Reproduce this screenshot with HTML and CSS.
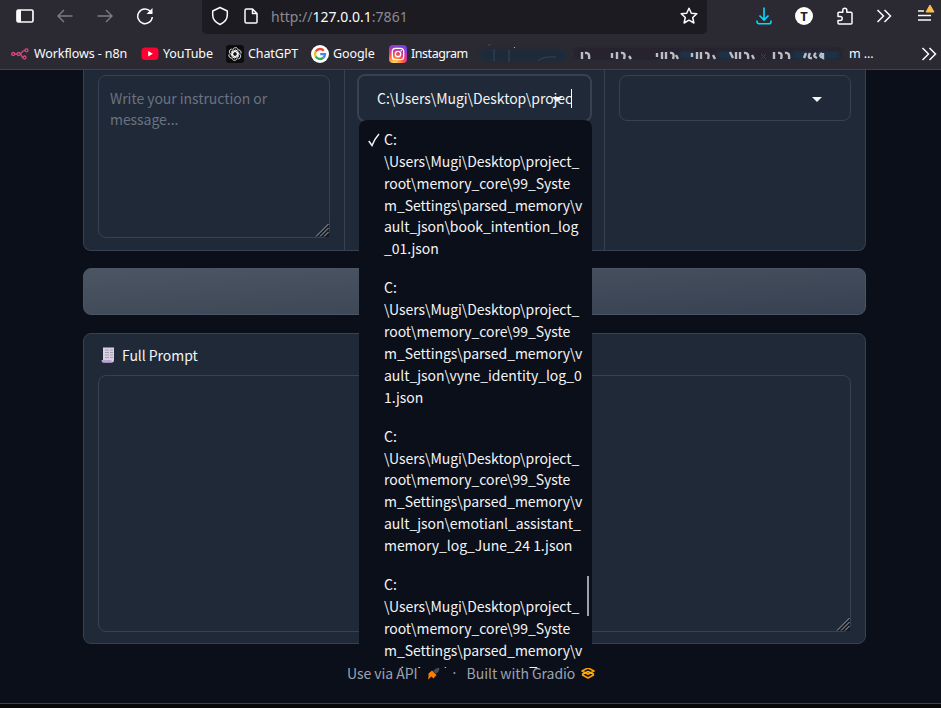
FILE: index.html
```html
<!DOCTYPE html>
<html lang="en">
<head>
<meta charset="utf-8">
<title>Gradio</title>
<link rel="stylesheet" href="styles.css">
</head>
<body>
<header class="chrome">
  <div class="toolbar">
    <svg class="ic sidebar-ic" width="18" height="14" viewBox="0 0 18 14"><rect x="1" y="1" width="16" height="12" rx="1.5" fill="none" stroke="#fbfbfe" stroke-width="1.7"/><path d="M1 1h4v12H1z" fill="#fbfbfe"/></svg>
    <svg class="ic back-ic" width="16" height="14" viewBox="0 0 16 14"><path d="M15.500 7H1M7 1 1 7l6 6" fill="none" stroke="#7d7c83" stroke-width="1.4"/></svg>
    <svg class="ic fwd-ic" width="16" height="14" viewBox="0 0 16 14"><path d="M.5 7H15M9 1l6 6-6 6" fill="none" stroke="#7d7c83" stroke-width="1.4"/></svg>
    <svg class="ic reload-ic" width="18" height="18" viewBox="0 0 18 18"><path d="M14.500 4.500A7.300 7.300 0 1 0 16.300 10" fill="none" stroke="#fbfbfe" stroke-width="1.5"/><path d="M16.500 1v6h-6z" fill="#fbfbfe"/></svg>
    <div class="urlbar">
      <svg class="shield" width="18" height="20" viewBox="0 0 18 20"><path d="M9 1.500 16.300 5v4c0 4-3 7.500-7.300 9.500C4.700 16.500 1.700 13 1.700 9V5z" fill="none" stroke="#fbfbfe" stroke-width="1.500" stroke-linejoin="round"/></svg>
      <svg class="page" width="14" height="16" viewBox="0 0 14 16"><path d="M2.500 1H8.500L13 5.500v8.500a1 1 0 0 1-1 1H2.500a1.500 1.500 0 0 1-1.500-1.500v-11A1.500 1.500 0 0 1 2.500 1zM8.500 1v4.500H13" fill="none" stroke="#fbfbfe" stroke-width="1.500" stroke-linejoin="round"/></svg>
      <span class="url">http://<b>127.0.0.1</b>:7861</span>
      <svg class="star" width="18" height="18" viewBox="0 0 18 18"><path d="m9 1.200 2.300 5 5.500.6-4.100 3.700 1.200 5.500L9 13.200 4.100 16l1.200-5.500L1.200 6.800l5.500-.6z" fill="none" stroke="#fbfbfe" stroke-width="1.500" stroke-linejoin="round"/></svg>
    </div>
    <div class="tools">
      <svg width="16" height="18" viewBox="0 0 16 18"><path d="M8 .5v12M3.500 8.500 8 13l4.500-4.500M1 13.500v1.200a2 2 0 0 0 2 2h10a2 2 0 0 0 2-2v-1.200" fill="none" stroke="#00ddff" stroke-width="1.600"/></svg>
      <span class="avatar">T</span>
      <svg class="puzzle" width="16" height="18" viewBox="0 0 16 18"><path d="M1 6.200a1 1 0 0 1 1-1h3.800V3.300a2 2 0 0 1 4 0v1.900H14a1 1 0 0 1 1 1V16a1 1 0 0 1-1 1H2a1 1 0 0 1-1-1v-2.600h2.200a2 2 0 0 0 0-4H1z" fill="none" stroke="#fbfbfe" stroke-width="1.500" stroke-linejoin="round"/></svg>
      <svg class="more" width="16" height="14" viewBox="0 0 16 14"><path d="m1.500 1 6 6-6 6M8.500 1l6 6-6 6" fill="none" stroke="#fbfbfe" stroke-width="1.500"/></svg>
      <svg class="menu" width="18" height="18" viewBox="0 0 18 18"><path d="M1 7h6M1 11.500h13M1 16h13" stroke="#fbfbfe" stroke-width="1.500"/><path d="M13 1l4 7H9z" fill="#ffbd4f" stroke="#ffbd4f" stroke-linejoin="round"/></svg>
    </div>
  </div>
  <nav class="bookmarks">
    <span class="bm"><svg width="18" height="12" viewBox="0 0 18 12"><g fill="none" stroke="#d9487a" stroke-width="1.300"><circle cx="2.200" cy="6" r="1.500"/><circle cx="7.600" cy="6" r="1.500"/><circle cx="15.500" cy="2.300" r="1.500"/><circle cx="13.500" cy="9.500" r="1.500"/><path d="M3.700 6h2.400M9 6c2 0 1-3.500 5-3.700M9 6c2 0 1 3.300 3 3.500"/></g></svg>Workflows - n8n</span>
    <span class="bm yt"><svg width="18" height="18" viewBox="0 0 18 18"><rect x=".5" y="2.500" width="17" height="12.500" rx="3.500" fill="#ff0033"/><path d="m7.200 6 4.600 2.700-4.600 2.700z" fill="#fff"/></svg>YouTube</span>
    <span class="bm gpt"><svg width="18" height="18" viewBox="0 0 18 18"><rect width="18" height="18" rx="3" fill="#0d0d0d"/><g fill="none" stroke="#fff" stroke-width=".8"><path id="petal" d="M6.700 10.300V5.200a2.800 2.800 0 0 1 5-1.500M6.700 7.700l3.300-1.900 3.200 1.800"/><use href="#petal" transform="rotate(60 9 9)"/><use href="#petal" transform="rotate(120 9 9)"/><use href="#petal" transform="rotate(180 9 9)"/><use href="#petal" transform="rotate(240 9 9)"/><use href="#petal" transform="rotate(300 9 9)"/></g></svg>ChatGPT</span>
    <span class="bm goo"><svg width="18" height="18" viewBox="0 0 18 18"><circle cx="9" cy="9" r="9" fill="#fff"/><g fill="none" stroke-width="2.300"><path d="M12.800 5.700A5 5 0 0 0 4.700 6.500" stroke="#ea4335"/><path d="M4.700 6.500a5 5 0 0 0 0 5" stroke="#fbbc05"/><path d="M4.700 11.500a5 5 0 0 0 7.700 1.200" stroke="#34a853"/><path d="M12.400 12.700A5 5 0 0 0 14 9.200H9.200" stroke="#4285f4"/></g></svg>Google</span>
    <span class="bm ig"><svg width="18" height="18" viewBox="0 0 18 18"><defs><radialGradient id="igg" cx=".3" cy="1.050" r="1.100"><stop offset=".05" stop-color="#ffdc55"/><stop offset=".45" stop-color="#ff5b3a"/><stop offset=".65" stop-color="#d9309a"/><stop offset="1" stop-color="#6b45e8"/></radialGradient></defs><rect width="18" height="18" rx="4" fill="url(#igg)"/><g fill="none" stroke="#fff" stroke-width="1.300"><rect x="3.300" y="3.300" width="11.400" height="11.400" rx="3.200"/><circle cx="9" cy="9" r="2.700"/></g><circle cx="12.300" cy="5.700" r=".8" fill="#fff"/></svg>Instagram</span>
    <svg class="smudge" width="384" height="26" viewBox="0 0 384 26"><defs><filter id="soft" x="-5%" y="-50%" width="110%" height="200%"><feGaussianBlur stdDeviation="1.600"/></filter><filter id="soft2" x="-5%" y="-50%" width="110%" height="200%"><feGaussianBlur stdDeviation=".7"/></filter></defs>
      <g filter="url(#soft)"><rect x="1" y="9" width="88" height="12" rx="6" fill="#1f2b3b"/><rect x="95" y="7" width="270" height="13" rx="5" fill="#25242e"/><path d="M202 15h14M240 15h14M315 15h18M339 15h22" stroke="#1e3349" stroke-width="7"/></g>
      <path d="M16 9v12M31 10v12M60 21q4-5 18-4" fill="none" stroke="#3b4656"/><path d="M10 5.500l3-1.500" stroke="#6b3838"/><rect x="36" y="7" width="1" height="1" fill="#9ab8ff"/>
      <g filter="url(#soft2)" fill="none" stroke="#b9bfc4" stroke-width="2.400"><path d="M104 12v7M107 13q5-1 4 6M134 18v-5M139 12v7M143 13q5-1 3 6M151 16l2 3M179 17v-4M184 12v7M188 12v7M192 13q5-1 3 6M198 15l2 4M214 17v-4M219 12v7M223 12v7M227 13q5-1 3 6M235 15l2 4M252 12l3 6M258 12v7M262 12v7M266 13q5-1 4 6M274 15l2 4M296 12v7M300 13q5-1 3 6M307 13q5-1 4 6M326 18l2-5M332 13q-3 6 2 5M338 13q-4 3 1 5M344 13q-4 3 1 5V13"/></g><path d="M283 14l5 5m0-5l-5 5" stroke="#555560" opacity=".6"/></svg>
    <span class="tail">m ...</span>
    <svg class="more2" width="16" height="14" viewBox="0 0 16 14"><path d="m1.500 1 6 6-6 6M8.500 1l6 6-6 6" fill="none" stroke="#fbfbfe" stroke-width="1.500"/></svg>
  </nav>
</header>
<main class="app">
  <section class="row">
    <div class="cell">
      <div class="area">Write your instruction or message...<svg class="grip" width="14" height="14" viewBox="0 0 14 14"><path d="M0 14 14 0v14z" fill="#171b24"/><path d="M1 13.500 13.500 1M5 13.500 13.500 5M9 13.500 13.500 9" stroke="#a9adb4" stroke-width="1"/></svg></div>
    </div>
    <div class="cell">
      <div class="combo open"><span class="value">C:\Users\Mugi\Desktop\projec</span><i class="caret"></i>
        <svg class="arrow" width="10" height="5" viewBox="0 0 10 5"><path d="M0 0h10L5 5z" fill="#f3f4f6"/></svg>
        <ul class="options">
          <li><svg class="check" width="12" height="14" viewBox="0 0 12 14"><path d="M.8 8 4 12.500Q6.500 6 11 1" fill="none" stroke="#f3f4f6" stroke-width="1.500"/></svg>C:<br>\Users\Mugi\Desktop\project_<br>root\memory_core\99_Syste<br>m_Settings\parsed_memory\v<br>ault_json\book_intention_log<br>_01.json</li>
          <li>C:<br>\Users\Mugi\Desktop\project_<br>root\memory_core\99_Syste<br>m_Settings\parsed_memory\v<br>ault_json\vyne_identity_log_0<br>1.json</li>
          <li>C:<br>\Users\Mugi\Desktop\project_<br>root\memory_core\99_Syste<br>m_Settings\parsed_memory\v<br>ault_json\emotianl_assistant_<br>memory_log_June_24 1.json</li>
          <li>C:<br>\Users\Mugi\Desktop\project_<br>root\memory_core\99_Syste<br>m_Settings\parsed_memory\v<br>ault_json\2025-06-25_Tran_l</li>
        </ul>
        <i class="thumb"></i>
      </div>
    </div>
    <div class="cell">
      <div class="combo"><svg class="arrow" width="10" height="5" viewBox="0 0 10 5"><path d="M0 0h10L5 5z" fill="#f3f4f6"/></svg></div>
    </div>
  </section>
  <div class="button"></div>
  <section class="panel">
    <div class="label"><svg width="14" height="16" viewBox="0 0 14 16"><path d="M2 .5h11v12.500q0 2.500-2 2.500H2z" fill="#d9d0e2"/><path d="M.5 13h10v2.500H2Q.5 15.500.5 13z" fill="#b9a3d3"/><path d="M4 3h4M9 3h3M4 5.500h4M9 5.500h3M4 8h4M9 8h3M4 10.500h4M9 10.500h3" stroke="#a79db2"/></svg>Full Prompt</div>
    <div class="area big"><svg class="grip" width="14" height="14" viewBox="0 0 14 14"><path d="M0 14 14 0v14z" fill="#171b24"/><path d="M1 13.500 13.500 1M5 13.500 13.500 5M9 13.500 13.500 9" stroke="#a9adb4" stroke-width="1"/></svg></div>
  </section>
</main>
<footer class="foot">
  <span class="api">Use via API</span>
  <svg class="rocket" width="13" height="13" viewBox="0 0 13 13"><path d="M6 4 9 1.500 12.500.5 12 4 9 7z" fill="#3f4b5d"/><path d="M1.500 6.500 5 3.500 9.500 8 6.500 11.500 4.500 9.500 1 12.500l.5-3z" fill="#ff7c00"/></svg>
  <span class="dot">·</span>
  <span class="built">Built with Gradio</span>
  <svg class="gradio" width="14" height="12" viewBox="0 0 14 12"><g fill="none" stroke-width="1.700" stroke-linejoin="round"><path d="M7 1 13 4 7 7.200 1 4z" stroke="#ff9c00"/><path d="M1 7.700 7 11l6-3.300" stroke="#ff9c00"/><path d="M1 7.500 7 4.500l6 3" stroke="#ffb700"/></g></svg>
</footer>
<div class="edge"></div>
</body>
</html>
```
FILE: styles.css
```css
* { box-sizing: border-box; }
html, body { margin: 0; height: 100%; }
body {
  width: 941px; height: 708px; overflow: hidden;
  background: #0b0f19; color: #f3f4f6;
  display: flex; flex-direction: column;
  font: 14px/22px "Noto Sans CJK SC", sans-serif;
  letter-spacing: -.05px;
}
svg { display: block; flex: none; }
.chrome { height: 70px; flex: none; background: #2b2a33; border-bottom: 1px solid #42414b; font-family: "Noto Sans", "Open Sans", sans-serif; color: #fbfbfe; }
.toolbar { display: flex; align-items: center; height: 34px; padding-left: 16px; letter-spacing: 0; }
.toolbar > .ic { margin-bottom: 2px; }
.back-ic { margin-left: 23px; }
.fwd-ic { margin-left: 24px; }
.reload-ic { margin-left: 23px; }
.urlbar { display: flex; align-items: center; width: 505px; height: 34px; margin-left: 48px; padding: 0 9px 2px; background: #1c1b22; border-radius: 0 0 5px 5px; }
.page { margin-left: 15px; }
.url { flex: 1; margin: 1px 0 0 13px; font-size: 14px; color: #8b8a92; white-space: nowrap; }
.url b { font-weight: 400; color: #fbfbfe; }
.tools { display: flex; align-items: center; margin-left: 49px; padding-bottom: 2px; }
.avatar { width: 18px; height: 18px; margin-left: 23px; border-radius: 50%; background: #fff; color: #222; font: 700 13px/18px "Noto Sans", sans-serif; text-align: center; }
.puzzle { margin-left: 24px; }
.more { margin-left: 23px; }
.menu { margin: -6px 0 0 25px; }
.bookmarks { display: flex; align-items: center; height: 35px; padding: 5px 4px 0 11px; font-size: 12.5px; line-height: 20px; letter-spacing: -.1px; }
.bm, .tail { display: flex; align-items: center; gap: 5px; white-space: nowrap; }
.bm { width: 130px; }
.yt { width: 85px; gap: 4px; }
.gpt { width: 85px; gap: 4px; }
.goo { width: 78px; gap: 4px; }
.ig { width: 89px; gap: 4px; letter-spacing: -.45px; }
.smudge { width: 384px; margin-top: -2px; }
.tail { margin-left: -13px; }
.more2 { margin-left: auto; }
.app { width: 783px; margin-left: 83px; }
.row { display: flex; height: 181px; background: #1f2937; border: 1px solid #374151; border-top: 0; border-radius: 0 0 8px 8px; }
.cell { width: 261px; padding: 5px 14px 0; border-right: 1px solid #374151; }
.cell:nth-child(2) { width: 260px; padding: 5px 12px 0; }
.cell:last-child { border: 0; }
.area { position: relative; width: 232px; height: 163px; padding: 12px 11px 11px; border: 1px solid #374151; border-radius: 8px; color: #6b7280; line-height: 21px; }
.grip { position: absolute; right: 0; bottom: 0; }
.combo { position: relative; display: flex; align-items: center; width: 232px; height: 46px; border: 1px solid #374151; border-radius: 8px; }
.open { width: 235px; height: 48px; margin-top: -1px; border-width: 2px; padding-left: 18px; }
.value { width: 194px; overflow: hidden; white-space: nowrap; line-height: 20px; }
.caret { position: absolute; left: 212px; top: 13px; width: 1px; height: 19px; background: #fff; }
.arrow { position: absolute; right: 28px; top: 21px; }
.options { position: absolute; z-index: 2; left: 0; top: 44px; width: 233px; height: 548px; margin: 0; padding: 0; list-style: none; overflow: hidden; background: #0b0f19; border-radius: 8px 8px 0 0; line-height: 21.85px; }
.options li { position: relative; height: 148.4px; padding: 9px 0 0 25px; white-space: nowrap; }
.check { position: absolute; left: 9px; top: 13px; }
.thumb { position: absolute; z-index: 3; left: 228px; top: 500px; width: 2px; height: 40px; background: #9ca0a8; }
.button { height: 47px; margin-top: 17px; background: linear-gradient(to bottom right, #4b5563, #374151); border: 1px solid #4b5563; border-radius: 8px; }
.panel { height: 311px; margin-top: 18px; padding: 11px 14px; background: #1f2937; border: 1px solid #374151; border-radius: 8px; }
.label { display: flex; align-items: center; gap: 7px; height: 20px; padding-left: 3px; }
.big { width: 753px; height: 257px; margin-top: 10px; }
.foot { display: flex; align-items: center; height: 24px; margin: 17px 0 0 347px; color: #9ca3af; }
.rocket { margin-left: 9px; }
.dot { width: 4px; margin-left: 13px; font-family: "Noto Sans", sans-serif; }
.built { margin-left: 10px; }
.gradio { margin-left: 6px; }
.edge { height: 5px; margin-top: auto; background: #080808; border-top: 1px solid #42414b; }
```
